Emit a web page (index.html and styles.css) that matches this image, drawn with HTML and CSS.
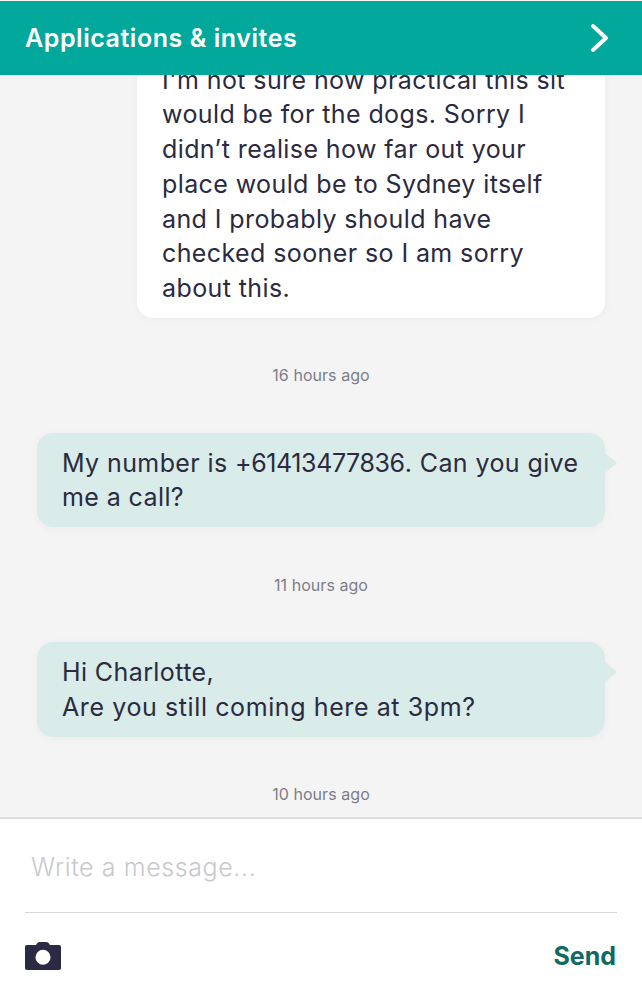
FILE: index.html
```html
<!DOCTYPE html>
<html>
<head>
  <meta charset="utf-8" />
  <title>Applications &amp; invites</title>
  <link rel="stylesheet" href="styles.css">
</head>
<body>
  <div class="app">
    <header class="topbar">
      <span class="topbar-title">Applications &amp; invites</span>
      <svg class="topbar-arrow" width="20" height="30" viewBox="0 0 20 30" aria-hidden="true">
        <path d="M3 3 L16 15 L3 27" fill="none" stroke="#ffffff" stroke-width="4" stroke-linecap="round" stroke-linejoin="round" />
      </svg>
    </header>

    <main class="thread">
      <div class="bubble bubble-them">
        <p>I'm not sure how practical this sit</p>
        <p>would be for the dogs. Sorry I</p>
        <p>didn’t realise how far out your</p>
        <p>place would be to Sydney itself</p>
        <p>and I probably should have</p>
        <p>checked sooner so I am sorry</p>
        <p>about this.</p>
      </div>
      <div class="stamp">16 hours ago</div>
      <div class="bubble bubble-me">
        <p>My number is <span class="phone">+61413477836</span>. Can you give</p>
        <p>me a call?</p>
      </div>
      <div class="stamp">11 hours ago</div>
      <div class="bubble bubble-me">
        <p>Hi Charlotte,</p>
        <p class="wide">Are you still coming here at 3pm?</p>
      </div>
      <div class="stamp">10 hours ago</div>
    </main>

    <footer class="composer">
      <div class="composer-input">Write a message...</div>
      <div class="composer-actions">
        <svg class="camera" width="36" height="28" viewBox="0 0 36 28" aria-hidden="true">
          <path fill="#2b2a45" d="M2 3 H11 C12 1 13 0 15 0 H21 C23 0 24 1 25 3 H34 C35.2 3 36 3.8 36 5 V26 C36 27.2 35.2 28 34 28 H2 C.8 28 0 27.2 0 26 V5 C0 3.8 .8 3 2 3 Z" />
          <circle cx="18" cy="15.2" r="7.5" fill="#ffffff" />
        </svg>
        <span class="send">Send</span>
      </div>
    </footer>
  </div>
</body>
</html>
```

FILE: styles.css
```css
:root {
  --teal: #02a89b;
  --bg-color: #f4f4f5;
  --text-color: #2b2a40;
  --bubble-me: #d9ece9;
}
* {
  box-sizing: border-box;
}
html, body {
  margin: 0;
  height: 100%;
}
body {
  font-family: Inter, "Open Sans", sans-serif;
  color: var(--text-color);
  background-color: var(--bg-color);
}
p {
  margin: 0;
}
.app {
  display: flex;
  flex-direction: column;
  height: 1000px;
}

/* top bar */
.topbar {
  flex: none;
  height: 74px;
  margin-top: 1px;
  padding: 0 32px 0 25px;
  display: flex;
  align-items: center;
  justify-content: space-between;
  background-color: var(--teal);
  color: #ffffff;
  position: relative;
  z-index: 1;
}
.topbar-title {
  font-size: 25px;
  font-weight: 600;
  letter-spacing: 0.55px;
}

/* message list, anchored to the bottom like a scrolled chat */
.thread {
  flex: 1;
  min-height: 0;
  overflow: hidden;
  display: flex;
  flex-direction: column;
  justify-content: flex-end;
  padding: 0 37px 11px;
}
.bubble {
  flex: none;
  position: relative;
  padding: 13px 25px 12px;
  border-radius: 16px;
  font-size: 25px;
  line-height: 34.7px;
  letter-spacing: 0.4px;
  box-shadow: 0 2px 10px rgba(40, 40, 70, 0.04);
}
.phone {
  letter-spacing: -0.4px;
}
.wide {
  letter-spacing: 0.6px;
}
.bubble-them {
  margin-left: 100px;
  background-color: #ffffff;
}
.bubble-me {
  background-color: var(--bubble-me);
}
.bubble-me::after {
  content: "";
  position: absolute;
  top: 20px;
  right: -12px;
  border-left: 12px solid var(--bubble-me);
  border-top: 10px solid transparent;
  border-bottom: 10px solid transparent;
}
.stamp {
  flex: none;
  margin: 45.5px 0;
  font-size: 16px;
  line-height: 24px;
  letter-spacing: 0.05px;
  text-align: center;
  color: #7d7d88;
}
.stamp:last-child {
  margin-bottom: 0;
}

/* composer */
.composer {
  flex: none;
  height: 183px;
  padding: 0 25px;
  background-color: #ffffff;
  border-top: 2px solid #dcdcdf;
}
.composer-input {
  height: 94px;
  padding: 2px 6px 0;
  display: flex;
  align-items: center;
  border-bottom: 1px solid #d6d6d9;
  font-size: 25px;
  font-weight: 300;
  letter-spacing: 0.6px;
  color: #c8c8cd;
}
.composer-actions {
  padding-top: 28px;
  display: flex;
  align-items: center;
  justify-content: space-between;
}
.send {
  padding-right: 1px;
  font-size: 25px;
  font-weight: 700;
  color: #0f6a5f;
}
```
